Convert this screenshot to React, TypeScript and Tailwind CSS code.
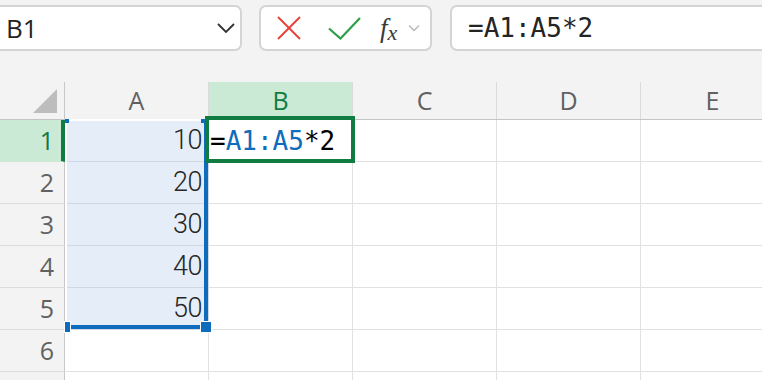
import React from "react";

const cols = ["A", "B", "C", "D", "E"];
const rows = [1, 2, 3, 4, 5, 6, 7];
const values: Record<number, string> = { 1: "10", 2: "20", 3: "30", 4: "40", 5: "50" };

export default function App() {
  return (
    <div
      className="relative w-[762px] h-[380px] overflow-hidden bg-white"
      style={{ fontFamily: '"Open Sans", "Noto Sans", sans-serif' }}
    >
      {/* Toolbar */}
      <div className="h-[82px] bg-[#f3f3f3] flex items-start pt-[5px]">
        {/* Name box */}
        <div className="ml-[-8px] w-[250px] h-[46px] shrink-0 bg-white border-2 border-[#d4d4d4] rounded-[7px] flex items-center pl-[12px] pr-[5px]">
          <span className="text-[26px] leading-none text-[#242424]">B1</span>
          <svg className="ml-auto" width="18" height="10" viewBox="0 0 18 10">
            <polyline points="1,1 9,9 17,1" fill="none" stroke="#333" strokeWidth="1.8" />
          </svg>
        </div>
        {/* Buttons */}
        <div className="ml-[17px] w-[173px] h-[46px] shrink-0 bg-white border-2 border-[#d4d4d4] rounded-[7px] flex items-center pl-[16px]">
          <svg width="24" height="24" viewBox="0 0 24 24">
            <line x1="1" y1="1" x2="23" y2="23" stroke="#e8413c" strokeWidth="2" />
            <line x1="23" y1="1" x2="1" y2="23" stroke="#e8413c" strokeWidth="2" />
          </svg>
          <svg className="ml-[27px]" width="33" height="23" viewBox="0 0 33 23">
            <polyline points="1,11.5 12.5,21.5 32,1" fill="none" stroke="#2f9e48" strokeWidth="2.2" />
          </svg>
          <span className="ml-[19px] flex items-end text-[#3a3a3a] leading-none">
            <span className="italic text-[27px]" style={{ fontFamily: '"Liberation Serif", serif' }}>
              f
            </span>
            <span className="italic text-[22px] mb-[-2px]" style={{ fontFamily: '"Liberation Serif", serif' }}>
              x
            </span>
          </span>
          <svg className="ml-[11px]" width="12" height="8" viewBox="0 0 12 8">
            <polyline points="1,1.5 6,6.5 11,1.5" fill="none" stroke="#b8b8b8" strokeWidth="1.4" />
          </svg>
        </div>
        {/* Formula bar */}
        <div className="ml-[18px] flex-1 mr-[-20px] h-[46px] bg-white border-2 border-[#d4d4d4] rounded-[7px] flex items-center pl-[16px]">
          <span
            className="text-[26px] leading-none text-[#242424]"
            style={{ fontFamily: '"DejaVu Sans Mono", monospace' }}
          >
            =A1:A5*2
          </span>
        </div>
      </div>

      {/* Column headers */}
      <div className="flex h-[38px] bg-[#f3f3f3] border-b border-[#c4c4c4]">
        <div className="w-[65px] shrink-0 border-r border-[#c8c8c8] flex justify-end items-end pr-[7px] pb-[6px]">
          <svg width="24" height="24" viewBox="0 0 24 24">
            <polygon points="24,0 24,24 0,24" fill="#bdbdbd" />
          </svg>
        </div>
        {cols.map((c) => (
          <div
            key={c}
            className={`w-[144px] shrink-0 border-r border-[#dadada] flex items-center justify-center text-[25px] leading-none ${
              c === "B" ? "bg-[#caead6] text-[#107c41]" : "text-[#616161]"
            }`}
          >
            {c}
          </div>
        ))}
      </div>

      {/* Rows */}
      {rows.map((r) => (
        <div key={r} className="flex h-[42px]">
          <div
            className={`w-[65px] shrink-0 border-b flex items-center justify-end text-[25px] leading-none ${
              r === 1
                ? "bg-[#caead6] text-[#107c41] border-r-4 border-r-[#107c41] border-b-[#caead6] pr-[7px]"
                : "bg-[#f3f3f3] text-[#616161] border-r border-r-[#c8c8c8] border-b-[#dcdcdc] pr-[10px]"
            }`}
          >
            {r <= 6 ? r : ""}
          </div>
          {cols.map((c) => {
            const inRange = c === "A" && r <= 5;
            return (
              <div
                key={c}
                className={`w-[144px] shrink-0 border-r border-b flex items-center ${
                  inRange ? "bg-[#e5eef8] border-[#cfd8e3] justify-end pr-[6px]" : "border-[#e1e1e1]"
                }`}
              >
                {inRange && (
                  <span
                    className="text-[27px] leading-none text-[#262626] font-light tracking-[-0.5px]"
                    style={{ fontFamily: "Roboto, sans-serif" }}
                  >
                    {values[r]}
                  </span>
                )}
                {c === "B" && r === 1 && (
                  <span
                    className="pl-[1px] text-[26px] leading-none text-black"
                    style={{ fontFamily: '"DejaVu Sans Mono", monospace' }}
                  >
                    =<span className="text-[#0f6cbd]">A1:A5</span>*2
                  </span>
                )}
              </div>
            );
          })}
        </div>
      ))}

      {/* Range reference border */}
      <div className="absolute left-[65px] top-[119px] w-[143px] h-[210px] border-l-2 border-t-2 border-l-white border-t-white border-r-4 border-b-4 border-r-[#0f6cbd] border-b-[#0f6cbd] pointer-events-none" />
      {/* Handles */}
      <div className="absolute left-[65px] top-[119px] w-[4px] h-[4px] bg-[#0f6cbd]" />
      <div className="absolute left-[201px] top-[119px] w-[8px] h-[4px] bg-[#0f6cbd]" />
      <div className="absolute left-[65px] top-[322px] w-[5px] h-[10px] bg-[#0f6cbd] outline outline-1 outline-white" />
      <div className="absolute left-[201px] top-[322px] w-[10px] h-[10px] bg-[#0f6cbd] outline outline-1 outline-white" />

      {/* Active cell border */}
      <div className="absolute left-[205px] top-[116px] w-[150px] h-[47px] border-4 border-[#107c41] pointer-events-none" />
    </div>
  );
}
